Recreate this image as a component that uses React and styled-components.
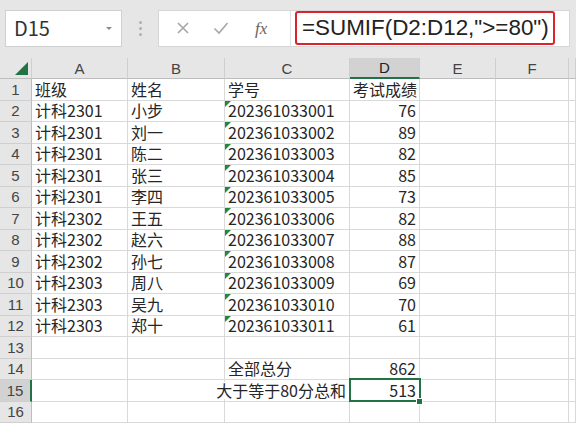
import React from 'react'
import styled, { createGlobalStyle, css } from 'styled-components'

const GlobalStyle = createGlobalStyle`
  html, body {
    margin: 0;
    padding: 0;
    background: #e6e6e6;
    overflow: hidden;
  }
  body {
    font-family: "Noto Sans CJK SC", "Liberation Sans", sans-serif;
  }
`

const Page = styled.div`
  width: 576px;
  height: 428px;
  display: flex;
  flex-direction: column;
  background: #e6e6e6;
  overflow: hidden;
`

const Toolbar = styled.div`
  height: 58px;
  display: flex;
  align-items: center;
  padding: 0 6px 0 5px;
  box-sizing: border-box;
  flex-shrink: 0;
`

const NameBox = styled.div`
  width: 117px;
  height: 37px;
  box-sizing: border-box;
  background: #fff;
  border: 1px solid #d0d0d0;
  display: flex;
  align-items: center;
  padding: 0 9px 0 8px;
  font-size: 20px;
  color: #333;
  margin-top: -2px;
`

const NameText = styled.span`
  flex: 1;
  line-height: 1;
`

const Caret = styled.span`
  width: 0;
  height: 0;
  border-left: 3px solid transparent;
  border-right: 3px solid transparent;
  border-top: 3px solid #8a8a8a;
`

const Dots = styled.div`
  width: 36px;
  display: flex;
  flex-direction: column;
  align-items: center;
  gap: 3px;
  margin-top: -2px;

  span {
    width: 3px;
    height: 3px;
    border-radius: 50%;
    background: #b0b0b0;
  }
`

const FxButtons = styled.div`
  width: 132px;
  height: 37px;
  box-sizing: border-box;
  background: #fff;
  border: 1px solid #d6d6d6;
  border-right: none;
  display: flex;
  align-items: center;
  padding-left: 12px;
  gap: 14px;
  margin-top: -2px;
`

const IconBtn = styled.span`
  width: 24px;
  display: flex;
  justify-content: center;
  align-items: center;
`

const FxLabel = styled.span`
  font-family: "Liberation Serif", serif;
  font-style: italic;
  font-size: 17px;
  line-height: 1;
  color: #666;
  margin-left: 8px;
`

const FormulaBar = styled.div`
  flex: 1;
  height: 37px;
  box-sizing: border-box;
  background: #fff;
  border: 1px solid #d6d6d6;
  border-left: 1px solid #e2e2e2;
  display: flex;
  align-items: center;
  padding-left: 4px;
  margin-top: -2px;
`

const Formula = styled.div`
  border: 2px solid #d9232d;
  border-radius: 3px;
  height: 34px;
  box-sizing: border-box;
  width: 260px;
  display: flex;
  align-items: center;
  padding-left: 5px;
  font-family: "Liberation Sans", sans-serif;
  font-size: 22.4px;
  line-height: 1;
  color: #222;
  white-space: nowrap;
`

const Sheet = styled.div`
  flex: 1;
  display: grid;
  grid-template-columns: 32px 96px 97px 125px 70px 76px 73px 1fr;
  grid-template-rows: 21px repeat(16, 21.5px);
  background: #fff;
`

const HeadCell = styled.div`
  background: #e6e6e6;
  border-right: 1px solid #cfcfcf;
  border-bottom: 1px solid #bdbdbd;
  box-sizing: border-box;
  display: flex;
  align-items: center;
  justify-content: center;
  font-family: "Liberation Sans", sans-serif;
  font-size: 15px;
  line-height: 1;
  color: #444;
  position: relative;

  ${(p) =>
    p.$active &&
    css`
      background: #d2d2d2;
      border-bottom: 2px solid #217346;
      color: #222;
    `}
`

const Corner = styled(HeadCell)`
  justify-content: flex-end;
  align-items: flex-end;
  padding: 0 3px 3px 0;
`

const RowHead = styled.div`
  background: #e6e6e6;
  border-right: 1px solid #bdbdbd;
  border-bottom: 1px solid #cfcfcf;
  box-sizing: border-box;
  display: flex;
  align-items: center;
  justify-content: center;
  font-family: "Liberation Sans", sans-serif;
  font-size: 15px;
  line-height: 15px;
  color: #444;

  ${(p) =>
    p.$active &&
    css`
      background: #d2d2d2;
      border-right: 2px solid #217346;
    `}
`

const Cell = styled.div`
  border-right: 1px solid #d9d9d9;
  border-bottom: 1px solid #d9d9d9;
  box-sizing: border-box;
  display: flex;
  align-items: center;
  justify-content: ${(p) => (p.$right ? 'flex-end' : 'flex-start')};
  padding: 0 3px;
  font-size: 16px;
  line-height: 17px;
  color: #262626;
  white-space: nowrap;
  position: relative;
  min-width: 0;

  ${(p) =>
    p.$flag &&
    css`
      &::before {
        content: '';
        position: absolute;
        left: 0;
        top: 0;
        border-top: 6px solid #1f8a3c;
        border-right: 6px solid transparent;
      }
    `}

  ${(p) =>
    p.$selected &&
    css`
      &::after {
        content: '';
        position: absolute;
        left: -1px;
        top: -2px;
        right: -2px;
        bottom: -1px;
        border: 2px solid #217346;
        pointer-events: none;
      }
    `}
`

const Overflow = styled.span`
  background: #fff;
  flex-shrink: 0;
  position: relative;
  z-index: 1;
`

const FillHandle = styled.span`
  position: absolute;
  right: -4px;
  bottom: -4px;
  width: 5px;
  height: 5px;
  background: #217346;
  border: 1px solid #fff;
  z-index: 2;
`

const rows = [
  ['班级', '姓名', '学号', '考试成绩'],
  ['计科2301', '小步', '202361033001', 76],
  ['计科2301', '刘一', '202361033002', 89],
  ['计科2301', '陈二', '202361033003', 82],
  ['计科2301', '张三', '202361033004', 85],
  ['计科2301', '李四', '202361033005', 73],
  ['计科2302', '王五', '202361033006', 82],
  ['计科2302', '赵六', '202361033007', 88],
  ['计科2302', '孙七', '202361033008', 87],
  ['计科2303', '周八', '202361033009', 69],
  ['计科2303', '吴九', '202361033010', 70],
  ['计科2303', '郑十', '202361033011', 61],
  ['', '', '', ''],
  ['', '', '全部总分', 862],
  ['', '', '大于等于80分总和', 513],
  ['', '', '', ''],
]

const letters = ['A', 'B', 'C', 'D', 'E', 'F', '']

const CloseIcon = () => (
  <svg width="14" height="14" viewBox="0 0 14 14">
    <path d="M2 2 L12 12 M12 2 L2 12" stroke="#a6a6a6" strokeWidth="1.6" fill="none" />
  </svg>
)

const CheckIcon = () => (
  <svg width="16" height="14" viewBox="0 0 16 14">
    <path d="M1.5 7.5 L6 12 L14.5 2" stroke="#a6a6a6" strokeWidth="1.6" fill="none" />
  </svg>
)

const CornerMark = () => (
  <svg width="13" height="13" viewBox="0 0 13 13">
    <path d="M13 0 L13 13 L0 13 Z" fill="#217346" />
  </svg>
)

export default function App() {
  return (
    <Page>
      <GlobalStyle />
      <Toolbar>
        <NameBox>
          <NameText>D15</NameText>
          <Caret />
        </NameBox>
        <Dots>
          <span />
          <span />
          <span />
        </Dots>
        <FxButtons>
          <IconBtn>
            <CloseIcon />
          </IconBtn>
          <IconBtn>
            <CheckIcon />
          </IconBtn>
          <FxLabel>fx</FxLabel>
        </FxButtons>
        <FormulaBar>
          <Formula>=SUMIF(D2:D12,"&gt;=80")</Formula>
        </FormulaBar>
      </Toolbar>
      <Sheet>
        <Corner>
          <CornerMark />
        </Corner>
        {letters.map((l, i) => (
          <HeadCell key={i} $active={l === 'D'}>
            {l}
          </HeadCell>
        ))}
        {rows.map((r, ri) => {
          const rowNo = ri + 1
          return (
            <React.Fragment key={ri}>
              <RowHead $active={rowNo === 15}>{rowNo}</RowHead>
              <Cell>{r[0]}</Cell>
              <Cell>{r[1]}</Cell>
              <Cell $flag={/^\d+$/.test(r[2])} $right={rowNo === 15}>
                {rowNo === 15 ? <Overflow>{r[2]}</Overflow> : r[2]}
              </Cell>
              <Cell $right={rowNo !== 1} $selected={rowNo === 15}>
                {r[3]}
                {rowNo === 15 && <FillHandle />}
              </Cell>
              <Cell />
              <Cell />
              <Cell />
            </React.Fragment>
          )
        })}
      </Sheet>
    </Page>
  )
}
